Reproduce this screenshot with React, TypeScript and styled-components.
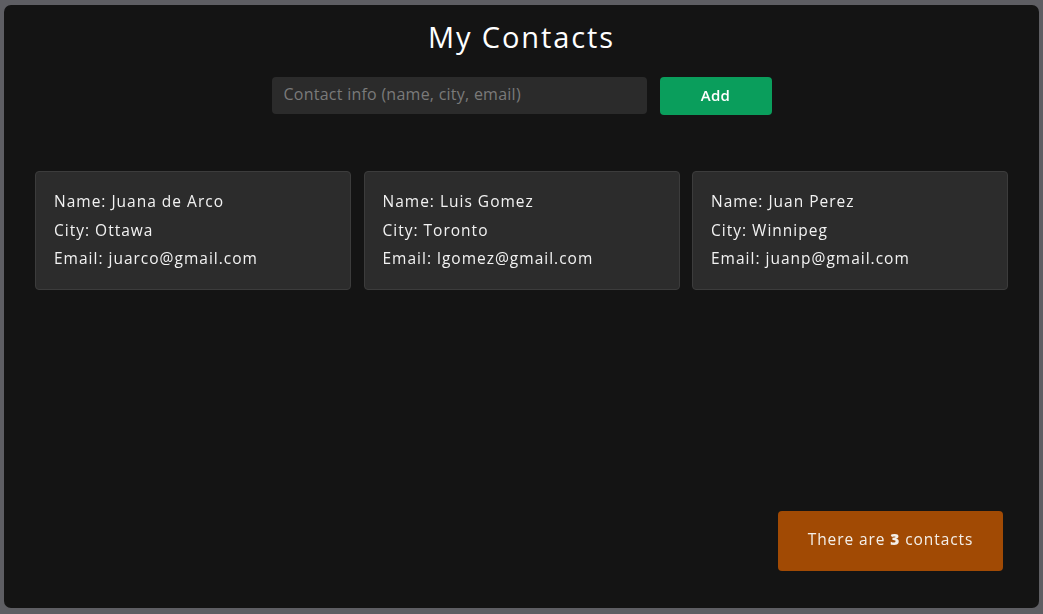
import React, { useEffect, useRef, useState } from "react";
import styled, { createGlobalStyle } from "styled-components";

const Global = createGlobalStyle`
  html, body {
    margin: 0;
    padding: 0;
    background: #5e5e63;
  }
  body {
    font-family: "Open Sans", "Noto Sans", sans-serif;
  }
  * { box-sizing: border-box; }
`;

const Panel = styled.div`
  margin: 5px 4px 0 4px;
  height: 603px;
  background: #141414;
  border-radius: 7px;
  display: flex;
  flex-direction: column;
  padding: 13px 31px 37px 31px;
`;

const Title = styled.h1`
  margin: 0;
  text-align: center;
  font-size: 29px;
  line-height: 38px;
  font-weight: 400;
  letter-spacing: 1.9px;
  color: #ffffff;
`;

const Form = styled.form`
  margin-top: 21px;
  display: flex;
  justify-content: center;
  gap: 13px;
`;

const Input = styled.input`
  width: 375px;
  height: 37px;
  border: none;
  outline: none;
  border-radius: 4px;
  background: #2b2b2b;
  padding: 0 12px 3px 12px;
  color: #e0e0e0;
  caret-color: #ffffff;
  font-family: inherit;
  font-size: 16px;
  letter-spacing: 0.25px;
  &::placeholder {
    color: #7a7a7a;
  }
`;

const AddButton = styled.button`
  width: 112px;
  height: 38px;
  border: none;
  border-radius: 4px;
  background: #0a9e5c;
  color: #ffffff;
  font-family: inherit;
  font-size: 15px;
  font-weight: 600;
  letter-spacing: 0.3px;
  padding: 0 0 2px 0;
  cursor: pointer;
`;

const Grid = styled.div`
  margin-top: 56px;
  display: grid;
  grid-template-columns: repeat(3, 316px);
  justify-content: space-between;
`;

const Card = styled.div`
  height: 119px;
  background: #2c2c2c;
  border: 1px solid #3c3c3c;
  border-radius: 4px;
  padding: 15px 18px 0 18px;
`;

const Line = styled.p`
  margin: 0;
  font-size: 15.5px;
  line-height: 28.5px;
  font-weight: 500;
  letter-spacing: 1px;
  color: #f2f2f2;
`;

const Footer = styled.div`
  margin-top: auto;
  display: flex;
  justify-content: flex-end;
  padding-right: 5px;
`;

const Counter = styled.div`
  width: 225px;
  height: 60px;
  border-radius: 4px;
  background: #a14a04;
  color: #f4efe9;
  display: flex;
  align-items: center;
  justify-content: center;
  padding-bottom: 4px;
  font-size: 15.5px;
  font-weight: 500;
  letter-spacing: 0.9px;
  b { font-weight: 800; margin: 0 5px; }
`;

const contacts = [
  { name: "Juana de Arco", city: "Ottawa", email: "juarco@gmail.com" },
  { name: "Luis Gomez", city: "Toronto", email: "lgomez@gmail.com" },
  { name: "Juan Perez", city: "Winnipeg", email: "juanp@gmail.com" },
];

export default function App() {
  const ref = useRef<HTMLInputElement>(null);
  const [value, setValue] = useState("");
  useEffect(() => {
    ref.current?.focus();
  }, []);
  return (
    <>
      <Global />
      <Panel>
        <Title>My Contacts</Title>
        <Form onSubmit={(e) => e.preventDefault()}>
          <Input
            ref={ref}
            value={value}
            onChange={(e) => setValue(e.target.value)}
            placeholder="Contact info (name, city, email)"
          />
          <AddButton type="submit">Add</AddButton>
        </Form>
        <Grid>
          {contacts.map((c) => (
            <Card key={c.email}>
              <Line>Name: {c.name}</Line>
              <Line>City: {c.city}</Line>
              <Line>Email: {c.email}</Line>
            </Card>
          ))}
        </Grid>
        <Footer>
          <Counter>
            There are<b>{contacts.length}</b>contacts
          </Counter>
        </Footer>
      </Panel>
    </>
  );
}
